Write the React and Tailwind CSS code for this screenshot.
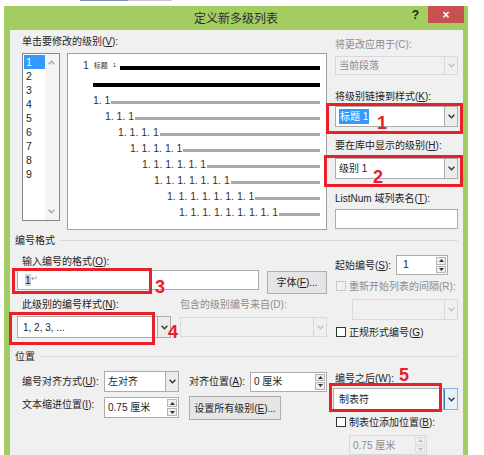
import React from 'react';

const FONT = "font-['Liberation_Sans','Noto_Sans_CJK_SC',sans-serif]";

const Chevron = ({ color = '#333' }) => (
  <svg width="7" height="5" viewBox="0 0 7 5">
    <path d="M0.6 0.8 L3.5 3.8 L6.4 0.8" fill="none" stroke={color} strokeWidth="1.3" />
  </svg>
);

const Tri = ({ up, color = '#333' }) => (
  <svg width="5" height="3" viewBox="0 0 5 3">
    <polygon points={up ? '0,3 5,3 2.5,0' : '0,0 5,0 2.5,3'} fill={color} />
  </svg>
);

const Combo = ({ className = '', text, disabled, selected, hot }) => (
  <div
    className={`flex border ${disabled ? 'border-[#d9d9d9] bg-[#f0f0f0] text-[#8d8d8d]' : 'border-[#acacac] bg-white text-[#1e1e1e]'} ${className}`}
  >
    <div className="flex-1 flex items-center pl-[3px] whitespace-nowrap overflow-hidden">
      {selected ? <span className="bg-[#3399ff] text-white px-[1px]">{text}</span> : text}
    </div>
    <div
      className={`w-[13px] flex items-center justify-center border-l ${
        disabled
          ? 'border-[#d9d9d9]'
          : hot
          ? 'border-[#3c7fb1] bg-[#e5f1fb] outline outline-1 outline-[#7eb4ea]'
          : 'border-[#acacac] bg-[#ececec]'
      }`}
    >
      <Chevron color={disabled ? '#c0c0c0' : '#333'} />
    </div>
  </div>
);

const Spin = ({ className = '', text, disabled }) => (
  <div
    className={`flex border ${disabled ? 'border-[#d9d9d9] bg-[#f0f0f0] text-[#8d8d8d]' : 'border-[#acacac] bg-white text-[#1e1e1e]'} ${className}`}
  >
    <div className="flex-1 flex items-center pl-[3px] whitespace-nowrap">{text}</div>
    <div className="w-[12px] flex flex-col gap-[1px] p-[1px]">
      <div className={`flex-1 flex items-center justify-center border ${disabled ? 'border-[#dcdcdc]' : 'border-[#b5b5b5] bg-[#efefef]'}`}>
        <Tri up color={disabled ? '#c0c0c0' : '#333'} />
      </div>
      <div className={`flex-1 flex items-center justify-center border ${disabled ? 'border-[#dcdcdc]' : 'border-[#b5b5b5] bg-[#efefef]'}`}>
        <Tri color={disabled ? '#c0c0c0' : '#333'} />
      </div>
    </div>
  </div>
);

const Check = ({ disabled }) => (
  <span
    className={`inline-block w-[10px] h-[10px] border ${disabled ? 'border-[#c8c8c8] bg-[#f0f0f0]' : 'border-[#333] bg-white'}`}
  />
);

const Button = ({ className = '', children }) => (
  <div className={`flex items-center justify-center border border-[#adadad] bg-[#e5e5e5] ${className}`}>{children}</div>
);

const levels = [
  { text: '1. 1', pad: 'pl-[25px]' },
  { text: '1. 1. 1', pad: 'pl-[37px]' },
  { text: '1. 1. 1. 1', pad: 'pl-[50px]' },
  { text: '1. 1. 1. 1. 1', pad: 'pl-[62px]' },
  { text: '1. 1. 1. 1. 1. 1', pad: 'pl-[74px]' },
  { text: '1. 1. 1. 1. 1. 1. 1', pad: 'pl-[86px]' },
  { text: '1. 1. 1. 1. 1. 1. 1. 1', pad: 'pl-[99px]' },
  { text: '1. 1. 1. 1. 1. 1. 1. 1. 1', pad: 'pl-[111px]' },
];

const Label = ({ className = '', children, gray }) => (
  <div className={`h-[14px] leading-[14px] whitespace-nowrap ${gray ? 'text-[#8d8d8d]' : ''} ${className}`}>{children}</div>
);

const RedNum = ({ className, n }) => (
  <div className={`absolute text-[18px] leading-[18px] font-bold text-[#e8202a] ${className}`}>{n}</div>
);

export default function App() {
  return (
    <div className={`relative w-[484px] h-[455px] bg-white overflow-hidden text-[10px] text-[#1e1e1e] ${FONT}`}>
      {/* background strip above the dialog */}
      <div className="h-[6px] flex items-start">
        <div className="ml-[80px] w-[48px] h-[1px] bg-[#8390a8]" />
        <div className="w-[44px] h-[1px] bg-[#c8c8c8]" />
      </div>

      <div className="ml-[4px] w-[464px] h-[449px] bg-[#a3cd62] flex flex-col">
        {/* title bar */}
        <div className="h-[26px] grid grid-cols-[1fr_auto_1fr]">
          <div />
          <div className="text-[12px] text-[#2e2e2e] pt-[3px] font-['Noto_Sans_CJK_SC',sans-serif]">定义新多级列表</div>
          <div className="flex justify-end items-start">
            <div className="text-[12px] font-bold text-[#222] leading-[14px] mt-[2px]">?</div>
            <div className="ml-[9px] mr-[4px] w-[36px] h-[17px] bg-[#c75050] flex items-center justify-center text-white text-[12px] font-bold">
              ×
            </div>
          </div>
        </div>

        {/* client area */}
        <div className="ml-[6px] w-[453px] flex-1 bg-[#f0f0f0] pt-[5px]">
          {/* top row */}
          <div className="flex pl-[12px]">
            <div className="w-[305px]">
              <Label>
                单击要修改的级别(<u>V</u>):
              </Label>
              <div className="flex items-start mt-[4px]">
                <div className="w-[38px] h-[168px] border border-[#828790] bg-white flex">
                  <div className="w-[22px] pt-[1px] pl-[1px]">
                    {[1, 2, 3, 4, 5, 6, 7, 8, 9].map((n) => (
                      <div
                        key={n}
                        className={`h-[14px] leading-[14px] pl-[2px] text-[10.5px] ${n === 1 ? 'bg-[#3399ff] text-white' : ''}`}
                      >
                        {n}
                      </div>
                    ))}
                  </div>
                  <div className="flex-1 bg-[#f4f4f4] flex flex-col justify-between items-center py-[6px]">
                    <div className="rotate-180">
                      <Chevron color="#a6a6a6" />
                    </div>
                    <Chevron color="#a6a6a6" />
                  </div>
                </div>

                <div className="ml-[7px] w-[261px] h-[177px] border border-[#a0a0a0] bg-white pt-[5px] pr-[6px] text-[#333]">
                  <div className="h-[17px] flex items-center pl-[15px]">
                    <span className="text-[10.5px] -mt-[4px]">1</span>
                    <span className="ml-[5px] text-[7px] -mt-[2px]">标题</span>
                    <span className="ml-[5px] text-[6px] -mt-[4px]">1</span>
                    <div className="ml-[4px] flex-1 h-[4px] bg-black" />
                  </div>
                  <div className="h-[17px] flex items-center pl-[25px]">
                    <div className="flex-1 h-[4px] bg-black" />
                  </div>
                  {levels.map((l) => (
                    <div key={l.text} className={`h-[16px] flex items-center ${l.pad}`}>
                      <span className="text-[10.5px] whitespace-pre">{l.text}</span>
                      <div className="ml-[1px] mt-[3px] flex-1 h-[3px] bg-[#a9a9a9]" />
                    </div>
                  ))}
                </div>
              </div>
            </div>

            <div className="ml-[8px] w-[123px]">
              <Label gray className="mt-[3px]">
                将更改应用于(C):
              </Label>
              <Combo disabled className="mt-[4px] h-[19px]" text="当前段落" />
              <Label className="mt-[15px]">
                将级别链接到样式(<u>K</u>):
              </Label>
              <Combo className="mt-[2px] h-[21px]" text="标题 1" selected />
              <Label className="mt-[12px]">
                要在库中显示的级别(<u>H</u>):
              </Label>
              <Combo className="mt-[5px] h-[21px]" text="级别 1" />
              <Label className="mt-[13px]">
                ListNum 域列表名(<u>T</u>):
              </Label>
              <div className="mt-[3px] h-[20px] border border-[#acacac] bg-white" />
            </div>
          </div>

          {/* 编号格式 */}
          <div className="flex items-center mt-[3px] h-[14px] pl-[5px] pr-[5px]">
            <span>编号格式</span>
            <div className="flex-1 ml-[5px] h-px bg-[#d8d8d8]" />
          </div>

          <div className="flex pl-[7px]">
            <div className="w-[310px]">
              <Label className="mt-[8px] pl-[5px]">
                输入编号的格式(<u>O</u>):
              </Label>
              <div className="flex items-start mt-[1px]">
                <div className="w-[242px] h-[20px] border border-[#acacac] bg-white flex items-center pl-[7px]">
                  <span className="bg-[#d4d4d4] text-[10.5px] leading-[12px]">1</span>
                  <span className="text-[8px] text-[#888] -mt-[2px]">↵</span>
                </div>
                <Button className="ml-[8px] mt-[1px] w-[60px] h-[23px]">
                  字体(<u>F</u>)...
                </Button>
              </div>
              <div className="flex mt-[4px]">
                <Label className="w-[163px] pl-[5px]">
                  此级别的编号样式(<u>N</u>):
                </Label>
                <Label gray>包含的级别编号来自(D):</Label>
              </div>
              <div className="flex items-start mt-[4px]">
                <Combo className="w-[154px] h-[22px]" text={<span className="pl-[2px]">1, 2, 3, ...</span>} />
                <Combo disabled className="ml-[9px] mt-[1px] w-[147px] h-[20px]" text="" />
              </div>
            </div>

            <div className="ml-[8px] w-[123px]">
              <div className="mt-[8px] h-[20px] flex items-center">
                <span className="w-[61px] whitespace-nowrap">
                  起始编号(<u>S</u>):
                </span>
                <Spin className="w-[52px] h-[20px]" text={<span className="text-[10.5px] pl-[3px]">1</span>} />
              </div>
              <div className="mt-[4px] h-[14px] flex items-center">
                <span className="ml-[1px] flex">
                  <Check disabled />
                </span>
                <span className="ml-[3px] text-[#8d8d8d] whitespace-nowrap">重新开始列表的间隔(R):</span>
              </div>
              <Combo disabled className="ml-[17px] mt-[6px] w-[106px] h-[21px]" text="" />
              <div className="mt-[5px] h-[14px] flex items-center">
                <span className="ml-[1px] flex">
                  <Check />
                </span>
                <span className="ml-[3px] whitespace-nowrap">
                  正规形式编号(<u>G</u>)
                </span>
              </div>
            </div>
          </div>

          {/* 位置 */}
          <div className="flex items-center mt-[10px] h-[14px] pl-[5px] pr-[5px]">
            <span>位置</span>
            <div className="flex-1 ml-[5px] h-px bg-[#d8d8d8]" />
          </div>

          <div className="flex pl-[12px]">
            <div className="w-[305px]">
              <div className="mt-[8px] h-[21px] flex items-center">
                <span className="w-[82px] whitespace-nowrap">
                  编号对齐方式(<u>U</u>):
                </span>
                <Combo className="w-[75px] h-[21px]" text="左对齐" />
                <span className="ml-[10px] w-[61px] whitespace-nowrap">
                  对齐位置(<u>A</u>):
                </span>
                <Spin className="w-[77px] h-[20px]" text="0 厘米" />
              </div>
              <div className="mt-[4px] flex items-start">
                <Label className="mt-[2px] w-[82px]">
                  文本缩进位置(<u>I</u>):
                </Label>
                <Spin className="mt-[1px] w-[75px] h-[21px]" text="0.75 厘米" />
                <Button className="ml-[10px] w-[92px] h-[24px]">
                  设置所有级别(<u>E</u>)...
                </Button>
              </div>
            </div>

            <div className="ml-[8px] w-[123px]">
              <Label className="mt-[9px]">
                编号之后(<u>W</u>):
              </Label>
              <Combo hot className="mt-[2px] -ml-[2px] w-[125px] h-[22px]" text={<span className="pl-[2px]">制表符</span>} />
              <div className="mt-[5px] h-[14px] flex items-center">
                <span className="ml-[1px] flex">
                  <Check />
                </span>
                <span className="ml-[3px] whitespace-nowrap">
                  制表位添加位置(<u>B</u>):
                </span>
              </div>
              <Spin disabled className="ml-[14px] mt-[6px] w-[78px] h-[20px]" text="0.75 厘米" />
            </div>
          </div>
        </div>
      </div>

      {/* red annotation overlays */}
      <div className="absolute left-[326px] top-[103px] w-[137px] h-[31px] border-[3px] border-[#e8202a]" />
      <RedNum className="left-[377px] top-[114px]" n="1" />
      <div className="absolute left-[324px] top-[155px] w-[139px] h-[32px] border-[3px] border-[#e8202a]" />
      <RedNum className="left-[373px] top-[168px]" n="2" />
      <div className="absolute left-[12px] top-[268px] w-[140px] h-[26px] border-[3px] border-[#e8202a]" />
      <RedNum className="left-[155px] top-[278px]" n="3" />
      <div className="absolute left-[9px] top-[312px] w-[146px] h-[33px] border-[3px] border-[#e8202a]" />
      <RedNum className="left-[168px] top-[323px]" n="4" />
      <div className="absolute left-[329px] top-[383px] w-[113px] h-[29px] border-[3px] border-[#e8202a]" />
      <RedNum className="left-[399px] top-[366px]" n="5" />
    </div>
  );
}
